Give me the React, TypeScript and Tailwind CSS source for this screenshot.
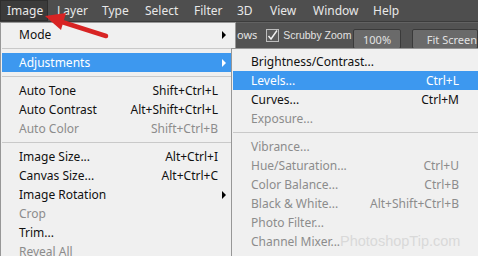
import React from "react";

type Item = { label: string; shortcut?: string; disabled?: boolean; active?: boolean; sub?: boolean } | "sep";

const mainItems: Item[] = [
  { label: "Mode", sub: true },
  "sep",
  { label: "Adjustments", sub: true, active: true },
  "sep",
  { label: "Auto Tone", shortcut: "Shift+Ctrl+L" },
  { label: "Auto Contrast", shortcut: "Alt+Shift+Ctrl+L" },
  { label: "Auto Color", shortcut: "Shift+Ctrl+B", disabled: true },
  "sep",
  { label: "Image Size...", shortcut: "Alt+Ctrl+I" },
  { label: "Canvas Size...", shortcut: "Alt+Ctrl+C" },
  { label: "Image Rotation", sub: true },
  { label: "Crop", disabled: true },
  { label: "Trim..." },
  { label: "Reveal All", disabled: true },
];

const subItems: Item[] = [
  { label: "Brightness/Contrast..." },
  { label: "Levels...", shortcut: "Ctrl+L", active: true },
  { label: "Curves...", shortcut: "Ctrl+M" },
  { label: "Exposure...", disabled: true },
  "sep",
  { label: "Vibrance...", disabled: true },
  { label: "Hue/Saturation...", shortcut: "Ctrl+U", disabled: true },
  { label: "Color Balance...", shortcut: "Ctrl+B", disabled: true },
  { label: "Black & White...", shortcut: "Alt+Shift+Ctrl+B", disabled: true },
  { label: "Photo Filter...", disabled: true },
  { label: "Channel Mixer...", disabled: true },
];

const topMenus = [
  { label: "Layer", w: "w-[45px]" },
  { label: "Type", w: "w-[43px]" },
  { label: "Select", w: "w-[49px]" },
  { label: "Filter", w: "w-[43px]" },
  { label: "3D", w: "w-[33px]" },
  { label: "View", w: "w-[43px]" },
  { label: "Window", w: "w-[60px]" },
  { label: "Help", w: "w-[40px]" },
];

const MenuList = ({ items, textPad, rightPad }: { items: Item[]; textPad: string; rightPad: string }) => (
  <>
    {items.map((it, i) =>
      it === "sep" ? (
        <div key={i} className="h-[9px] flex items-center">
          <div className="w-full h-px bg-[#c9c9c9]" />
        </div>
      ) : (
        <div
          key={i}
          className={`relative h-[19px] flex items-center justify-between ${textPad} ${rightPad} ${
            it.active ? "bg-[#3d98ef] text-white" : it.disabled ? "text-[#8c8c8c]" : "text-[#111]"
          }`}
        >
          <span>{it.label}</span>
          {it.shortcut && <span>{it.shortcut}</span>}
          {it.sub && (
            <span
              className={`absolute right-[8px] top-[6px] w-0 h-0 border-y-[4px] border-y-transparent border-l-[4px] ${
                it.active ? "border-l-white" : "border-l-black"
              }`}
            />
          )}
        </div>
      )
    )}
  </>
);

export default function App() {
  return (
    <div className="relative w-[478px] h-[256px] overflow-hidden bg-[#535353] font-['Noto_Sans',sans-serif]">
      {/* menu bar */}
      <div className="flex h-[22px] bg-[#4e4e4e] text-[12px] text-[#e8e8e8] border-b border-[#3c3c3c]">
        <div className="w-[48px] pl-[6px] flex items-center bg-[#3b3b3b] border border-[#2e2e2e]">Image</div>
        {topMenus.map((m) => (
          <div key={m.label} className={`${m.w} pl-[9px] flex items-center`}>
            {m.label}
          </div>
        ))}
      </div>

      {/* options bar */}
      <div className="flex items-center h-[26px] pl-[237px] text-[11px] text-[#e2e2e2] border-t border-[#626262] whitespace-nowrap">
        <span className="w-[32px]">ows</span>
        <div className="w-[13px] h-[13px] bg-[#5c5c5c] border border-[#bdbdbd] flex items-center justify-center">
          <svg width="11" height="11" viewBox="0 0 11 11">
            <path d="M1.5 6 L4 9 L10 0.5" fill="none" stroke="#f2f2f2" strokeWidth="1.4" />
          </svg>
        </div>
        <span className="w-[81px] pl-[4px] text-[10.5px] font-['Liberation_Sans',sans-serif]">Scrubby Zoom</span>
        <div className="w-[52px] h-[20px] mt-[6px] rounded-[2px] bg-[#6a6a6a] border border-[#3a3a3a] flex justify-center pt-[2px]">
          100%
        </div>
        <div className="ml-[11px] w-[70px] h-[20px] mt-[6px] rounded-[2px] bg-[#6a6a6a] border border-[#3a3a3a] pl-[14px] pt-[2px]">
          Fit Screen
        </div>
      </div>

      {/* Image menu */}
      <div className="absolute left-0 top-[22px] w-[236px] h-[240px] bg-[#f0f0f0] border border-[#979797] px-[1px] py-[2px] text-[12px]">
        <MenuList items={mainItems} textPad="pl-[17px]" rightPad="pr-[16px]" />
      </div>

      {/* Adjustments submenu */}
      <div className="absolute left-[231px] top-[48px] w-[252px] h-[215px] bg-[#f0f0f0] border border-[#979797] px-[1px] py-[3px] text-[12px]">
        <MenuList items={subItems} textPad="pl-[18px]" rightPad="pr-[22px]" />
      </div>

      {/* watermark */}
      <div className="absolute left-[340px] top-[231px] text-[14.5px] leading-[20px] text-[#d9d9d9] font-['Liberation_Sans',sans-serif]">
        PhotoshopTip.com
      </div>

      {/* red arrow */}
      <svg className="absolute left-0 top-0" width="120" height="45" viewBox="0 0 120 45">
        <path d="M106 36 L62 22" stroke="#d82424" strokeWidth="4.5" strokeLinecap="round" />
        <polygon points="45,16 66,13 61,30" fill="#d82424" />
      </svg>
    </div>
  );
}
